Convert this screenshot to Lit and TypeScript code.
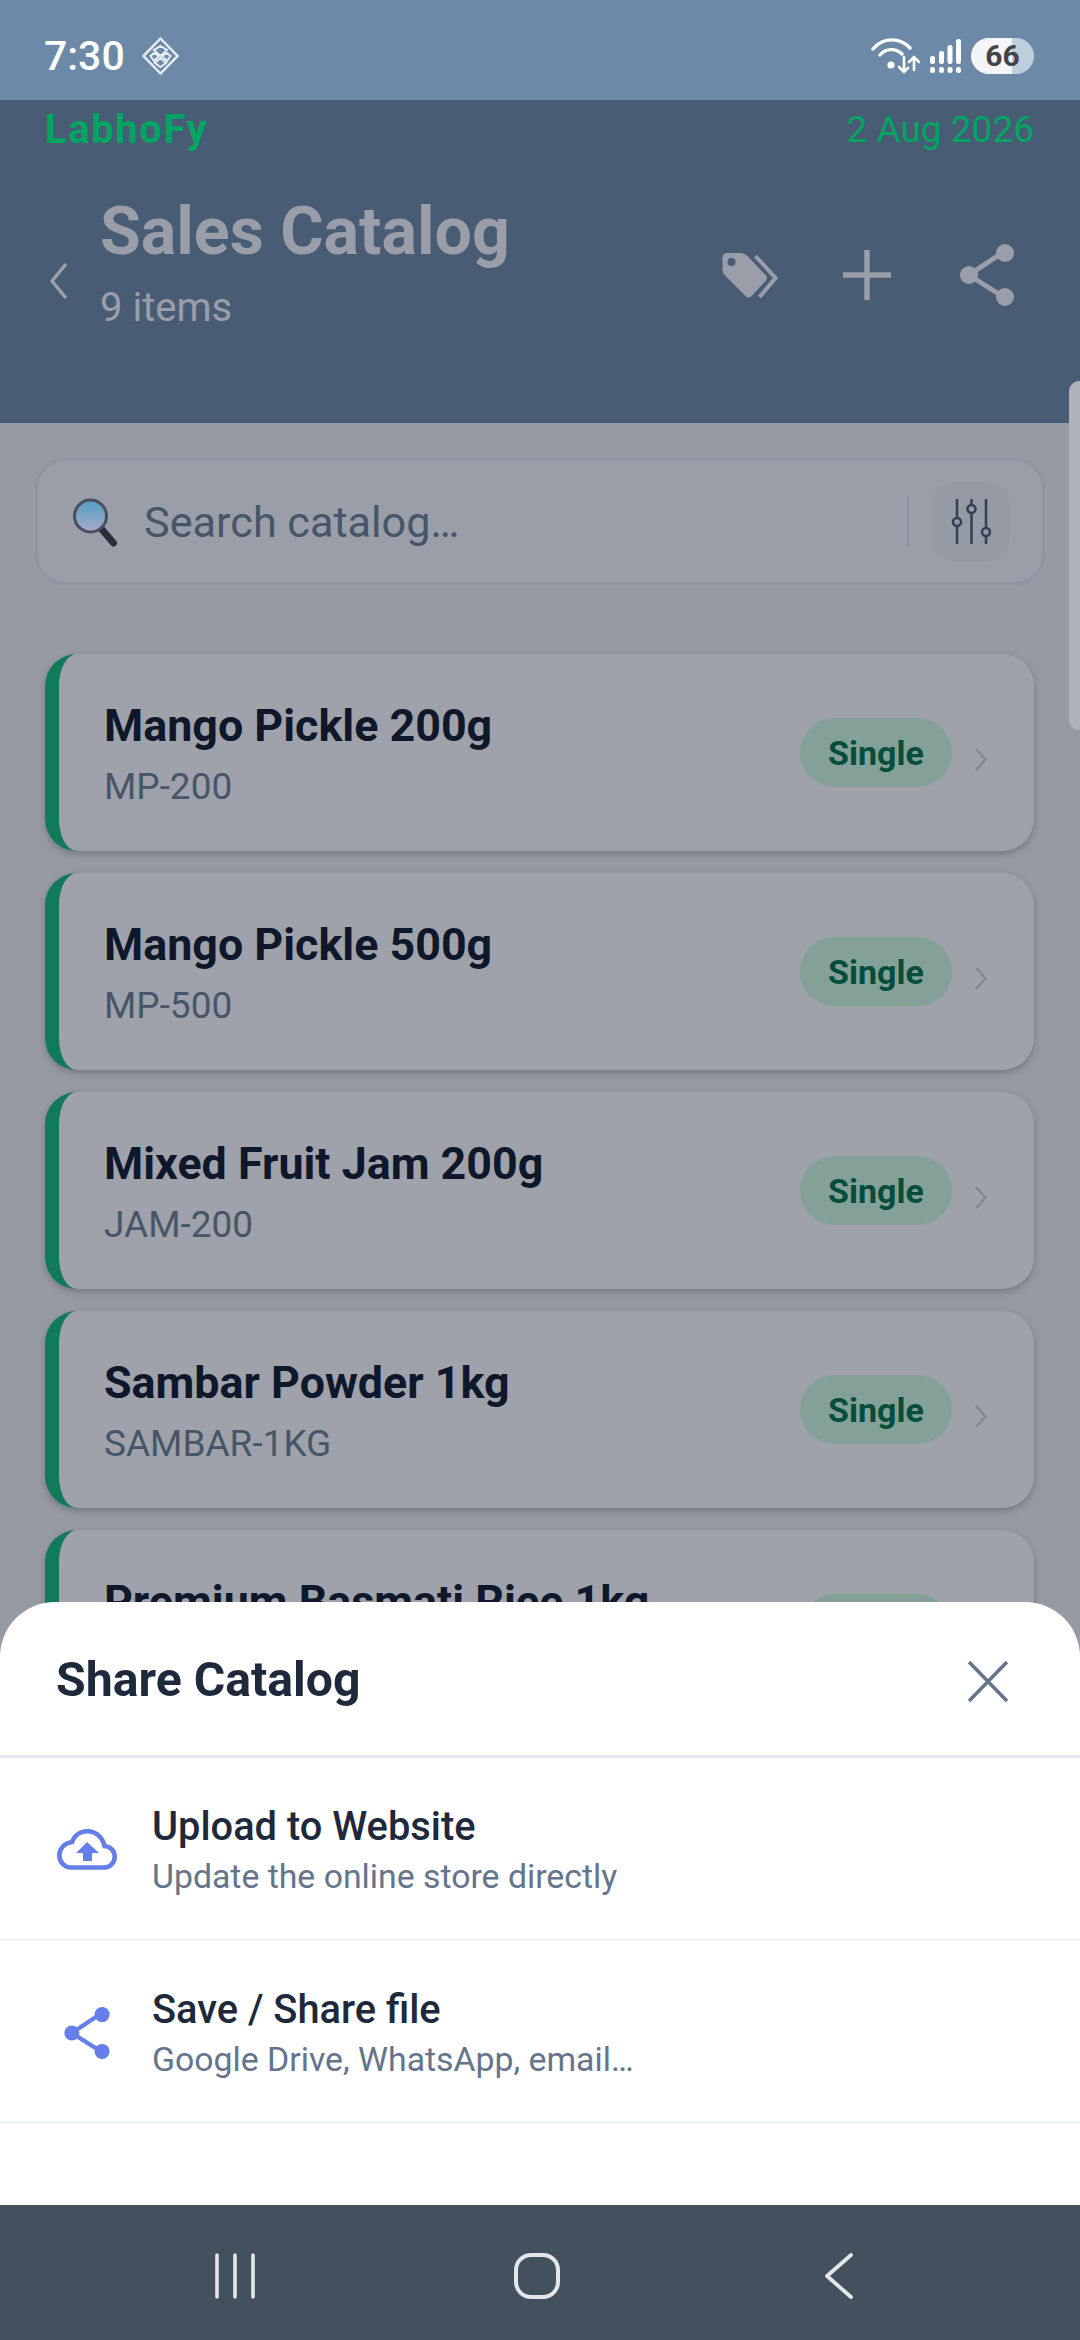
import { LitElement, html, css, svg } from "lit";
import { customElement } from "lit/decorators.js";

const products = [
  { name: "Mango Pickle 200g", sku: "MP-200" },
  { name: "Mango Pickle 500g", sku: "MP-500" },
  { name: "Mixed Fruit Jam 200g", sku: "JAM-200" },
  { name: "Sambar Powder 1kg", sku: "SAMBAR-1KG" },
  { name: "Premium Basmati Rice 1kg", sku: "RICE-1KG" },
];

// same three dot share glyph in the header and in the sheet
const shareGlyph = svg`
  <path d="M42 9 L9 31 L42 52" fill="none" stroke="currentColor" stroke-width="5"/>
  <circle cx="45" cy="9" r="9" fill="currentColor"/>
  <circle cx="9" cy="31" r="9" fill="currentColor"/>
  <circle cx="45" cy="53" r="9" fill="currentColor"/>
`;

@customElement("app-root")
export class AppRoot extends LitElement {
  static styles = css`
    :host {
      display: block;
      width: 1080px;
      height: 2340px;
      font-family: Roboto, "Noto Sans", sans-serif;
    }
    .screen {
      position: relative;
      height: 2340px;
      overflow: hidden;
      background: #979aa2;
    }
    svg {
      display: block;
      flex: none;
    }

    .status {
      height: 100px;
      box-sizing: border-box;
      padding: 11px 46px 0 44px;
      display: flex;
      align-items: center;
      background: #6c8aa8;
      color: #fff;
    }
    .time {
      font-size: 41px;
      font-weight: 500;
      margin-right: 17px;
    }
    .status-right {
      margin-left: auto;
      display: flex;
      align-items: center;
      gap: 10px;
    }
    .battery {
      width: 63px;
      height: 36px;
      border-radius: 18px;
      background: linear-gradient(90deg, #f3f5f8 65%, #bdcedd 65%);
      color: #444;
      font-size: 30px;
      font-weight: 700;
      line-height: 36px;
      text-align: center;
    }

    .header {
      height: 323px;
      box-sizing: border-box;
      padding: 8px 46px 0 45px;
      background: #485d75;
      color: #9b9ea8;
    }
    .brand-row {
      display: flex;
      justify-content: space-between;
      align-items: center;
      height: 43px;
      color: #00a562;
    }
    .brand {
      font-size: 40px;
      font-weight: 700;
      letter-spacing: 1.6px;
    }
    .date {
      font-size: 37px;
    }
    .title-row {
      display: flex;
      align-items: center;
      margin-top: 43px;
    }
    .back {
      margin: 37px 33px 0 5px;
    }
    .title {
      font-size: 66.3px;
      font-weight: 700;
      line-height: 75px;
    }
    .count {
      font-size: 40px;
      line-height: 44px;
      margin-top: 17px;
    }
    .actions {
      margin: 26px 19px 0 auto;
      display: flex;
      align-items: center;
      gap: 64px;
    }
    .share {
      margin-left: 4px;
    }

    .search {
      margin: 35px 35px 0 35px;
      height: 127px;
      box-sizing: border-box;
      padding: 0 32px 0 34px;
      display: flex;
      align-items: center;
      background: #9a9ea8;
      border: 3px solid #9095a4;
      border-radius: 30px;
    }
    .placeholder {
      margin: 2px 0 0 25px;
      font-size: 43.2px;
      color: #475569;
    }
    .divider {
      width: 2px;
      height: 51px;
      margin-left: auto;
      background: #8e94a3;
    }
    .filter {
      width: 79px;
      height: 79px;
      margin-left: 22px;
      display: flex;
      align-items: center;
      justify-content: center;
      border-radius: 24px;
      background: #959aa5;
    }

    .list {
      margin: 69px 46px 0 45px;
      display: flex;
      flex-direction: column;
      gap: 22px;
    }
    .card {
      height: 197px;
      box-sizing: border-box;
      padding: 0 47px 0 45px;
      display: flex;
      align-items: center;
      background: #9fa2aa;
      border-left: 14px solid #117a5c;
      border-radius: 32px;
      box-shadow: 0 3px 7px rgba(30, 35, 50, 0.28);
    }
    .info {
      flex: 1;
      padding-top: 4px;
    }
    .name {
      font-size: 44.8px;
      font-weight: 700;
      line-height: 50px;
      color: #0f172a;
    }
    .sku {
      font-size: 37px;
      line-height: 42px;
      margin-top: 15px;
      color: #475569;
    }
    .badge {
      width: 152px;
      height: 69px;
      border-radius: 35px;
      background: #84a199;
      color: #064e3b;
      font-size: 34px;
      font-weight: 700;
      line-height: 71px;
      text-align: center;
    }
    .chevron {
      margin: 13px 0 0 23px;
    }

    .scrollbar {
      position: absolute;
      top: 381px;
      right: 0;
      width: 11px;
      height: 349px;
      border-radius: 10px 0 0 10px;
      background: #b0b2b9;
    }

    .overlay {
      position: absolute;
      left: 0;
      right: 0;
      bottom: 0;
      display: flex;
      flex-direction: column;
    }
    .sheet {
      height: 603px;
      background: #fff;
      border-radius: 55px 55px 0 0;
    }
    .sheet-head {
      height: 156px;
      box-sizing: border-box;
      padding: 2px 72px 0 56px;
      display: flex;
      align-items: center;
      justify-content: space-between;
      border-bottom: 3px solid #e2e8f0;
    }
    .sheet-title {
      font-size: 48.2px;
      font-weight: 700;
      color: #1e293b;
    }
    .close {
      margin-top: 3px;
    }
    .option {
      height: 183px;
      box-sizing: border-box;
      padding-top: 3px;
      display: flex;
      align-items: center;
      border-bottom: 3px solid #f1f5f9;
    }
    .option-icon {
      width: 62px;
      margin: 0 34px 0 56px;
      display: flex;
      justify-content: center;
      color: #667eea;
    }
    .option-title {
      font-size: 39.8px;
      font-weight: 500;
      line-height: 47px;
      color: #1e293b;
    }
    .option-sub {
      font-size: 33.8px;
      line-height: 40px;
      margin-top: 7px;
      color: #64748b;
    }
    .nav {
      height: 135px;
      background: #43505e;
    }
    .nav-icons {
      height: 100%;
      box-sizing: border-box;
      padding: 48px 226px 0 215px;
      display: flex;
      justify-content: space-between;
      align-items: flex-start;
    }
    .home {
      margin-right: 5px;
    }
  `;

  renderStatus() {
    return html`
      <div class="status">
        <span class="time">7:30</span>
        <svg width="37" height="38" viewBox="0 0 37 38" fill="none" stroke="#e8eef4" stroke-width="2">
          <path d="M18.5 1.5 L35.5 19 L18.5 36.5 L1.5 19 Z" stroke-width="2.4"/>
          <path d="M18.5 9 L25 13 L18.5 19 L12 13 Z M12 16 L17 19 L12 24 L8.5 19 Z M25 16 L20 19 L25 24 L28.5 19 Z M18.5 21 L24 26 L18.5 30 L13 26 Z"/>
        </svg>
        <div class="status-right">
          <svg width="49" height="36" viewBox="0 0 49 36" fill="none" stroke="#fff" stroke-width="3.4" stroke-linecap="round">
            <path d="M2 11 C12 -1 29 -1 39 10"/>
            <path d="M9 17 C15 10 25 10 31 16"/>
            <circle cx="20" cy="27" r="3.6" fill="#fff" stroke="none"/>
            <path d="M33 19 V34 M28 29 L33 34 L37 30" stroke-width="2.6"/>
            <path d="M43 32 V20 M38 24 L43 19 L48 24" stroke-width="2.6"/>
          </svg>
          <svg width="31" height="34" viewBox="0 0 31 34" fill="#fff">
            <rect x="0" y="17" width="5" height="8" rx="2.2"/>
            <rect x="9" y="12" width="5" height="13" rx="2.2"/>
            <rect x="17.500" y="6" width="5" height="19" rx="2.2"/>
            <rect x="26" y="0" width="5" height="25" rx="2.2"/>
            <rect x="0" y="28" width="5" height="6" rx="2.2"/>
            <rect x="9" y="28" width="5" height="6" rx="2.2"/>
            <rect x="17.500" y="28" width="5" height="6" rx="2.2"/>
            <rect x="26" y="28" width="5" height="6" rx="2.2"/>
          </svg>
          <div class="battery">66</div>
        </div>
      </div>
    `;
  }

  renderHeader() {
    return html`
      <div class="header">
        <div class="brand-row">
          <span class="brand">LabhoFy</span>
          <span class="date">2 Aug 2026</span>
        </div>
        <div class="title-row">
          <svg class="back" width="17" height="36" viewBox="0 0 17 36" fill="none" stroke="currentColor" stroke-width="3.4">
            <path d="M16 1 L2 18 L16 35"/>
          </svg>
          <div>
            <div class="title">Sales Catalog</div>
            <div class="count">9 items</div>
          </div>
          <div class="actions">
            <svg width="57" height="47" viewBox="0 0 56 47">
              <path fill="currentColor" fill-rule="evenodd" d="M5 1 H18 Q22 1 25 4 L43 23 Q46 26 43 29 L29 44 Q26 47 23 44 L3 24 Q0 21 0 18 V6 Q0 1 5 1 Z M9 6 A4 4 0 1 0 9 14 A4 4 0 1 0 9 6 Z"/>
              <path fill="none" stroke="currentColor" stroke-width="4" d="M33 4 L53 26 L37 45"/>
            </svg>
            <svg width="48" height="50" viewBox="0 0 48 50" fill="currentColor">
              <rect x="21.250" y="0" width="5.500" height="50"/>
              <rect x="0" y="22.250" width="48" height="5.500"/>
            </svg>
            <svg class="share" width="56" height="62" viewBox="0 0 54 62">${shareGlyph}</svg>
          </div>
        </div>
      </div>
    `;
  }

  renderSearch() {
    return html`
      <div class="search">
        <svg width="47" height="50" viewBox="0 0 46 50">
          <defs>
            <linearGradient id="lens" x1="0" y1="0" x2="0" y2="1">
              <stop offset="0" stop-color="#4f9fc2"/>
              <stop offset="1" stop-color="#aaaacb"/>
            </linearGradient>
          </defs>
          <path d="M29 32 L41 46" stroke="#2c2d3b" stroke-width="7" stroke-linecap="round"/>
          <circle cx="18" cy="19" r="16" fill="url(#lens)" stroke="#4a4d60" stroke-width="3"/>
        </svg>
        <span class="placeholder">Search catalog…</span>
        <div class="divider"></div>
        <div class="filter">
          <svg width="40" height="46" viewBox="0 0 40 46" fill="#979ba6" stroke="#334155" stroke-width="2.6">
            <path d="M6 0 V45 M20.5 0 V45 M35 0 V45" fill="none"/>
            <circle cx="6" cy="23" r="4"/>
            <circle cx="20.5" cy="10" r="4"/>
            <circle cx="35" cy="33" r="4"/>
          </svg>
        </div>
      </div>
    `;
  }

  renderCard(product: { name: string; sku: string }) {
    return html`
      <div class="card">
        <div class="info">
          <div class="name">${product.name}</div>
          <div class="sku">${product.sku}</div>
        </div>
        <div class="badge">Single</div>
        <svg class="chevron" width="12" height="23" viewBox="0 0 12 23" fill="none" stroke="#7d879b" stroke-width="2.2">
          <path d="M1 1 L10.5 11.5 L1 22"/>
        </svg>
      </div>
    `;
  }

  renderSheet() {
    return html`
      <div class="sheet">
        <div class="sheet-head">
          <span class="sheet-title">Share Catalog</span>
          <svg class="close" width="40" height="41" viewBox="0 0 40 41" stroke="#64748b" stroke-width="3.6">
            <path d="M1 1 L39 40 M39 1 L1 40"/>
          </svg>
        </div>
        <div class="option">
          <div class="option-icon">
            <svg width="62" height="41" viewBox="0 0 60 41">
              <path fill="none" stroke="currentColor" stroke-width="4.6" d="M14 38.5 H47 C53 38.500 57.700 33.500 57.700 28 C57.700 22 53.500 17.500 47.500 17 C45.500 8 38.500 2.300 30.500 2.300 C23.500 2.300 17.500 6.500 15 13 C7.500 14 2.300 19.500 2.300 26.500 C2.300 33.500 8 38.500 14 38.500 Z"/>
              <path fill="currentColor" d="M30 13 L42 24 H35 V32 H26 V24 H19 Z"/>
            </svg>
          </div>
          <div>
            <div class="option-title">Upload to Website</div>
            <div class="option-sub">Update the online store directly</div>
          </div>
        </div>
        <div class="option">
          <div class="option-icon">
            <svg width="46" height="52" viewBox="0 0 54 62">${shareGlyph}</svg>
          </div>
          <div>
            <div class="option-title">Save / Share file</div>
            <div class="option-sub">Google Drive, WhatsApp, email…</div>
          </div>
        </div>
      </div>
    `;
  }

  render() {
    return html`
      <div class="screen">
        ${this.renderStatus()} ${this.renderHeader()} ${this.renderSearch()}
        <div class="list">${products.map((p) => this.renderCard(p))}</div>
        <div class="scrollbar"></div>
        <div class="overlay">
          ${this.renderSheet()}
          <div class="nav">
            <div class="nav-icons">
              <svg width="40" height="46" viewBox="0 0 40 46" fill="none" stroke="#e4e6e8" stroke-width="3.6" stroke-linecap="round">
                <path d="M2 2 V44 M20 2 V44 M38 2 V44"/>
              </svg>
              <svg class="home" width="46" height="46" viewBox="0 0 46 46" fill="none" stroke="#e4e6e8" stroke-width="4">
                <rect x="2" y="2" width="42" height="42" rx="15"/>
              </svg>
              <svg width="30" height="46" viewBox="0 0 30 46" fill="none" stroke="#e4e6e8" stroke-width="3.8" stroke-linecap="round" stroke-linejoin="round">
                <path d="M27 2 L3 23 L27 44"/>
              </svg>
            </div>
          </div>
        </div>
      </div>
    `;
  }
}
